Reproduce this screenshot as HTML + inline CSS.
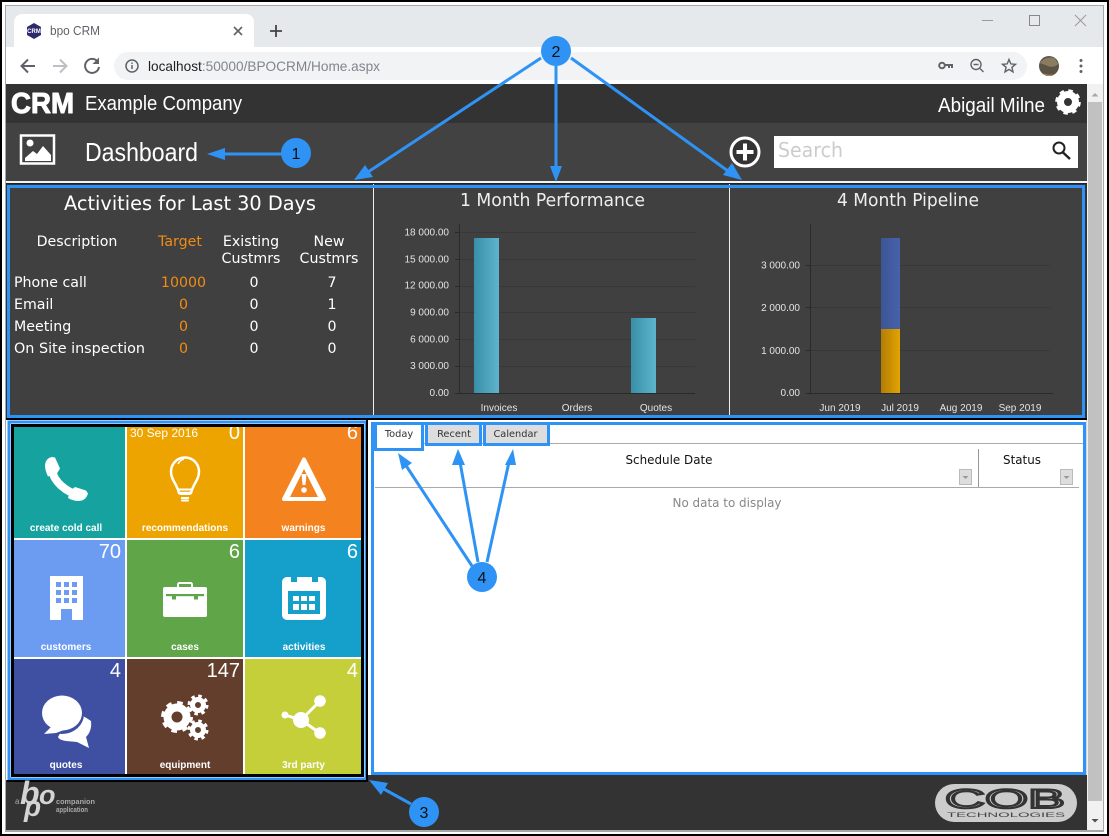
<!DOCTYPE html>
<html><head><meta charset="utf-8"><title>bpo CRM</title>
<style>
html,body{margin:0;padding:0;width:1109px;height:836px;overflow:hidden;background:#fff}
svg{display:block}
.s{font-family:"Liberation Sans",sans-serif}
.d{font-family:"DejaVu Sans",sans-serif}
.a{fill:#e4e4e4;font-family:"Liberation Sans",sans-serif;font-size:10px}
.r{font-family:"DejaVu Sans",sans-serif;font-size:14.2px;fill:#fff}
.n{font-family:"Liberation Sans",sans-serif;font-size:20px;fill:#fff;text-anchor:end}
.l{font-family:"Liberation Sans",sans-serif;font-size:10px;font-weight:bold;fill:#fff;text-anchor:middle}
.m{text-anchor:middle}
.e{text-anchor:end}
</style></head><body>
<svg width="1109" height="836" viewBox="0 0 1109 836" xmlns="http://www.w3.org/2000/svg">
<defs>
<linearGradient id="g1" x1="0" x2="1" y1="0" y2="0"><stop offset="0" stop-color="#3a8fa8"/><stop offset="1" stop-color="#5db4cd"/></linearGradient>
<linearGradient id="g2" x1="0" x2="1" y1="0" y2="0"><stop offset="0" stop-color="#3b5596"/><stop offset="1" stop-color="#4762aa"/></linearGradient>
<linearGradient id="g3" x1="0" x2="1" y1="0" y2="0"><stop offset="0" stop-color="#b37d05"/><stop offset="1" stop-color="#e3a400"/></linearGradient>
</defs>
<!-- outer frame -->
<rect width="1109" height="836" fill="#000"/>
<rect x="2" y="2" width="1105" height="832" fill="#fff"/>
<rect x="5" y="5" width="1099" height="827" fill="#a8a8a8"/>
<!-- browser chrome -->
<rect x="6" y="6" width="1097" height="41" fill="#e6e9ec"/>
<path d="M14 47 V22 a8 8 0 0 1 8-8 H246 a8 8 0 0 1 8 8 V47Z" fill="#fff"/>
<rect x="6" y="47" width="1097" height="37" fill="#fff"/>
<path d="M34 23 l7 4 v8 l-7 4 l-7-4 v-8z" fill="#2e2a6e"/>
<text x="34" y="33" class="s m" font-size="6" font-weight="bold" fill="#fff">CRM</text>
<text x="50" y="35" class="s" font-size="13" fill="#5f6368" textLength="50" lengthAdjust="spacingAndGlyphs">bpo CRM</text>
<path d="M234 27 l8 8 M242 27 l-8 8" stroke="#5f6368" stroke-width="1.6"/>
<path d="M276 25 v12 M270 31 h12" stroke="#444" stroke-width="1.8"/>
<path d="M982 20.5 h11" stroke="#999" stroke-width="1"/>
<rect x="1029.5" y="15.5" width="10" height="10" fill="none" stroke="#888"/>
<path d="M1075 15 l11 11 M1086 15 l-11 11" stroke="#999"/>
<!-- toolbar -->
<path d="M35 66 H22 M28 59.5 L21.5 66 L28 72.5" fill="none" stroke="#5f6368" stroke-width="2"/>
<path d="M53 66 H66 M60 59.5 L66.5 66 L60 72.5" fill="none" stroke="#bcbfc3" stroke-width="2"/>
<path d="M97.5 61.5 A7 7 0 1 0 99 67" fill="none" stroke="#5f6368" stroke-width="2"/>
<path d="M99 57.5 v6.5 h-6.5z" fill="#5f6368"/>
<rect x="114" y="52" width="913" height="28" rx="14" fill="#f1f3f4"/>
<circle cx="132" cy="66" r="6" fill="none" stroke="#5f6368" stroke-width="1.5"/>
<path d="M132 65 v4 M132 62.5 v1.4" stroke="#5f6368" stroke-width="1.5"/>
<text x="148" y="71" class="s" font-size="14" fill="#80868b" textLength="232" lengthAdjust="spacingAndGlyphs"><tspan fill="#202124">localhost</tspan>:50000/BPOCRM/Home.aspx</text>
<circle cx="942" cy="65.5" r="2.8" fill="none" stroke="#5f6368" stroke-width="2"/>
<path d="M945 65 h7 v3 M949 65 v3" fill="none" stroke="#5f6368" stroke-width="2"/>
<circle cx="976" cy="64.5" r="5" fill="none" stroke="#5f6368" stroke-width="1.4"/>
<path d="M973.5 64.5 h5 M980 68.5 l3.5 3.5" stroke="#5f6368" stroke-width="1.4"/>
<path d="M1009 59.5 l1.8 4.4 4.7.4 -3.6 3 1.1 4.6 -4-2.5 -4 2.5 1.1-4.6 -3.6-3 4.7-.4z" fill="none" stroke="#5f6368" stroke-width="1.4"/>
<circle cx="1049" cy="66" r="10" fill="#5b5344"/>
<path d="M1039.5 63 q6-7 15-5 l4 6 q-6 5-13 1z" fill="#8a7c60"/>
<path d="M1043 73 q6 3 12 1 l-3 2 h-6z" fill="#a3865e"/>
<circle cx="1081" cy="60.5" r="1.5" fill="#5f6368"/><circle cx="1081" cy="66" r="1.5" fill="#5f6368"/><circle cx="1081" cy="71.5" r="1.5" fill="#5f6368"/>
<!-- app background -->
<rect x="6" y="84" width="1081" height="746" fill="#333"/>
<rect x="6" y="123" width="1081" height="58" fill="#424242"/>
<rect x="6" y="181" width="1081" height="2" fill="#f4f4f4"/>
<rect x="6" y="183" width="1081" height="1" fill="#222"/>
<!-- scrollbar -->
<rect x="1087" y="84" width="16" height="746" fill="#f1f1f1"/>
<rect x="1088" y="102" width="14" height="699" fill="#c1c1c1"/>
<path d="M1095 93 l-3.500 3.500 h7z" fill="#a8a8a8"/>
<path d="M1091.500 819 h7 l-3.500 3.500z" fill="#505050"/>
<!-- header -->
<text x="11" y="113" class="s" font-size="29" font-weight="bold" fill="#fff" stroke="#fff" stroke-width="1" stroke-linejoin="round" textLength="63" lengthAdjust="spacingAndGlyphs">CRM</text>
<text x="85" y="110" class="s" font-size="20" fill="#fff" textLength="157" lengthAdjust="spacingAndGlyphs">Example Company</text>
<text x="1045" y="112" class="s e" font-size="20" fill="#fff" textLength="107" lengthAdjust="spacingAndGlyphs">Abigail Milne</text>
<circle cx="1068" cy="102" r="7.500" fill="none" stroke="#fff" stroke-width="7"/>
<circle cx="1068" cy="102" r="11" fill="none" stroke="#fff" stroke-width="3.600" stroke-dasharray="4.320 4.320"/>
<!-- subheader -->
<rect x="21" y="135.500" width="33" height="28" fill="none" stroke="#fff" stroke-width="2.500"/>
<circle cx="30" cy="143" r="3.500" fill="#fff"/>
<path d="M25 161 v-3 l8-7 4 3 6-8 8 9 v6z" fill="#fff"/>
<text x="85" y="161" class="s" font-size="26" fill="#fff" textLength="113" lengthAdjust="spacingAndGlyphs">Dashboard</text>
<circle cx="745" cy="152" r="14" fill="#333" stroke="#fff" stroke-width="3"/>
<path d="M745 143.500 v17 M736.500 152 h17" stroke="#fff" stroke-width="4"/>
<rect x="774" y="136" width="304" height="32" fill="#fff"/>
<text x="778" y="157" class="d" font-size="20" fill="#ccc" textLength="65" lengthAdjust="spacingAndGlyphs">Search</text>
<circle cx="1059" cy="148" r="5.500" fill="none" stroke="#222" stroke-width="2"/>
<path d="M1063 152.500 l7 6.500" stroke="#222" stroke-width="2.400"/>
<!-- stats panel -->
<rect x="7" y="185" width="1078" height="233" fill="#404040"/>
<path d="M373.500 184 V418 M729.500 184 V418" stroke="#eee" stroke-width="1"/>
<text x="190" y="210" class="d m" font-size="19.500" fill="#fff" textLength="252" lengthAdjust="spacingAndGlyphs">Activities for Last 30 Days</text>
<text x="77" y="246" class="r m">Description</text>
<text x="180" y="246" class="r m" style="fill:#f28c13">Target</text>
<text x="251" y="246" class="r m">Existing</text><text x="251" y="263" class="r m">Custmrs</text>
<text x="329" y="246" class="r m">New</text><text x="329" y="263" class="r m">Custmrs</text>
<text x="14" y="287" class="r">Phone call</text><text x="14" y="309" class="r">Email</text><text x="14" y="331" class="r">Meeting</text><text x="14" y="353" class="r" textLength="131" lengthAdjust="spacingAndGlyphs">On Site inspection</text>
<text x="183.500" y="287" class="r m" style="fill:#f28c13">10000</text><text x="183.500" y="309" class="r m" style="fill:#f28c13">0</text><text x="183.500" y="331" class="r m" style="fill:#f28c13">0</text><text x="183.500" y="353" class="r m" style="fill:#f28c13">0</text>
<text x="254" y="287" class="r m">0</text><text x="254" y="309" class="r m">0</text><text x="254" y="331" class="r m">0</text><text x="254" y="353" class="r m">0</text>
<text x="332" y="287" class="r m">7</text><text x="332" y="309" class="r m">1</text><text x="332" y="331" class="r m">0</text><text x="332" y="353" class="r m">0</text>
<!-- chart 1 -->
<text x="552.500" y="206" class="d m" font-size="17.500" fill="#eee" textLength="185" lengthAdjust="spacingAndGlyphs">1 Month Performance</text>
<path d="M459 232.500 H695 M459 259.500 H695 M459 286.500 H695 M459 312.500 H695 M459 339.500 H695 M459 366.500 H695" stroke="#383838"/>
<path d="M459.500 224 V393 M455 393.500 H695 M455 232.500 h4 M455 259.500 h4 M455 286.500 h4 M455 312.500 h4 M455 339.500 h4 M455 366.500 h4" stroke="#2a2a2a" fill="none"/>
<rect x="474" y="238" width="25" height="155" fill="url(#g1)"/>
<rect x="631" y="318" width="25" height="75" fill="url(#g1)"/>
<text x="449" y="235.500" class="a e">18 000.00</text><text x="449" y="262.500" class="a e">15 000.00</text><text x="449" y="288.500" class="a e">12 000.00</text><text x="449" y="315.500" class="a e">9 000.00</text><text x="449" y="342.500" class="a e">6 000.00</text><text x="449" y="369" class="a e">3 000.00</text><text x="449" y="396" class="a e">0.00</text>
<text x="499" y="411" class="a m">Invoices</text><text x="577" y="411" class="a m">Orders</text><text x="656" y="411" class="a m">Quotes</text>
<!-- chart 2 -->
<text x="908" y="206" class="d m" font-size="17.500" fill="#eee" textLength="142" lengthAdjust="spacingAndGlyphs">4 Month Pipeline</text>
<path d="M811 265.500 H1050 M811 307.500 H1050 M811 350.500 H1050" stroke="#383838"/>
<path d="M810.500 224 V393 M806 393.500 H1053 M806 265.500 h4 M806 307.500 h4 M806 350.500 h4" stroke="#2a2a2a" fill="none"/>
<rect x="881" y="238" width="19" height="91" fill="url(#g2)"/>
<rect x="881" y="329" width="19" height="64" fill="url(#g3)"/>
<text x="800" y="268.500" class="a e">3 000.00</text><text x="800" y="311" class="a e">2 000.00</text><text x="800" y="354" class="a e">1 000.00</text><text x="800" y="396" class="a e">0.00</text>
<text x="840" y="411" class="a m">Jun 2019</text><text x="900" y="411" class="a m">Jul 2019</text><text x="961" y="411" class="a m">Aug 2019</text><text x="1020" y="411" class="a m">Sep 2019</text>
<rect x="8.500" y="186.500" width="1075" height="230" fill="none" stroke="#2f93f5" stroke-width="3"/>
<!-- lower area -->
<rect x="6" y="418" width="1081" height="2" fill="#000"/>
<rect x="6" y="420" width="365" height="360" fill="#fff"/>
<rect x="14" y="427" width="111" height="111" fill="#16a3a0"/>
<rect x="127" y="427" width="116" height="111" fill="#eea400"/>
<rect x="245" y="427" width="116" height="111" fill="#f4821e"/>
<rect x="14" y="540" width="111" height="117" fill="#6c9bf2"/>
<rect x="127" y="540" width="116" height="117" fill="#60a649"/>
<rect x="245" y="540" width="116" height="117" fill="#14a0cb"/>
<rect x="14" y="659" width="111" height="115" fill="#3f50a3"/>
<rect x="127" y="659" width="116" height="115" fill="#643e2d"/>
<rect x="245" y="659" width="116" height="115" fill="#c4cf3a"/>
<!-- phone -->
<path d="M52 470 C54 482 66 492 79 495" fill="none" stroke="#fff" stroke-width="8"/>
<path d="M45 465 q1-7 7-8 l3 .5 5 11 -3 5 -9 3 q-3-6-3-11.500z" fill="#fff"/>
<path d="M70 491 l5-4 l11 3.500 2 3 q-2 7-9 7.500 q-6 0-11-3z" fill="#fff"/>
<!-- bulb -->
<path d="M179 493 C177 484 171 480 171 471.500 A14 14 0 0 1 199 471.500 C199 480 193 484 191 493z" fill="none" stroke="#fff" stroke-width="2.500"/>
<path d="M178 464 q2-4 6-5" fill="none" stroke="#fff" stroke-width="1.500"/>
<path d="M179 489.500 h12 M179.500 494 h11 M181 498 h8" stroke="#fff" stroke-width="2"/>
<path d="M182 500.500 h6" stroke="#fff" stroke-width="2" stroke-linecap="round"/>
<!-- warning -->
<path d="M304 459.500 L324 499 H284z" fill="#fff" stroke="#fff" stroke-width="4" stroke-linejoin="round"/>
<path d="M304 469 L318 497 H290z" fill="#f4821e"/>
<path d="M301.500 474 h5 l-1 11 h-3z" fill="#fff"/><circle cx="304" cy="490" r="2.800" fill="#fff"/>
<!-- building -->
<rect x="50" y="576" width="33" height="44" fill="#fff"/>
<path d="M56 582 h5 v5 h-5z M64 582 h5 v5 h-5z M72 582 h5 v5 h-5z M56 590 h5 v5 h-5z M64 590 h5 v5 h-5z M72 590 h5 v5 h-5z M56 598 h5 v5 h-5z M64 598 h5 v5 h-5z M72 598 h5 v5 h-5z M61 609 h11 v11 h-11z" fill="#6c9bf2"/>
<!-- briefcase -->
<rect x="163" y="587" width="44" height="30" rx="2" fill="#fff"/>
<rect x="178" y="583" width="14" height="6" rx="1.500" fill="none" stroke="#fff" stroke-width="2"/>
<rect x="166" y="594" width="38" height="2.200" fill="#60a649"/>
<rect x="172" y="595" width="4" height="4.500" fill="#60a649"/><rect x="194" y="595" width="4" height="4.500" fill="#60a649"/>
<!-- calendar -->
<rect x="282" y="577" width="44" height="43" rx="5" fill="#fff"/>
<rect x="288" y="591" width="32" height="23" fill="#14a0cb"/>
<rect x="291" y="576" width="6" height="6" fill="#14a0cb"/><rect x="312" y="576" width="6" height="6" fill="#14a0cb"/>
<path d="M293 596 h6 v5 h-6z M301 596 h6 v5 h-6z M309 596 h6 v5 h-6z M293 604 h6 v6 h-6z M301 604 h6 v6 h-6z M309 604 h6 v6 h-6z" fill="#fff"/>
<!-- chat -->
<path d="M72 712 q11 3 19 9 c1 8-2 13-5 16 l3 11 -12-6 -11-1 q-7-1-8-4z" fill="#fff"/>
<ellipse cx="62" cy="714" rx="22" ry="20" fill="#3f50a3"/>
<ellipse cx="62" cy="713" rx="20" ry="17.500" fill="#fff"/>
<path d="M51 727 l-7 7 12-1 8-3z" fill="#fff"/>
<!-- gears -->
<circle cx="177" cy="717" r="9.500" fill="none" stroke="#fff" stroke-width="8"/>
<circle cx="177" cy="717" r="14" fill="none" stroke="#fff" stroke-width="4" stroke-dasharray="5.500 5.500"/>
<circle cx="198" cy="705" r="5.500" fill="none" stroke="#fff" stroke-width="5"/>
<circle cx="198" cy="705" r="9" fill="none" stroke="#fff" stroke-width="3" stroke-dasharray="3.530 3.530"/>
<circle cx="198" cy="730" r="5.500" fill="none" stroke="#fff" stroke-width="5"/>
<circle cx="198" cy="730" r="9" fill="none" stroke="#fff" stroke-width="3" stroke-dasharray="3.530 3.530"/>
<!-- share -->
<path d="M320 701 L301 720 L320 733 M301 720 L285 715" stroke="#fff" stroke-width="3" fill="none"/>
<circle cx="301" cy="720" r="8" fill="#fff"/><circle cx="320" cy="701" r="5.800" fill="#fff"/><circle cx="320" cy="733" r="5.800" fill="#fff"/><circle cx="285" cy="715" r="3.500" fill="#fff"/>
<!-- tile text -->
<text x="130" y="437" class="s" font-size="12" fill="#fff">30 Sep 2016</text>
<text x="240" y="439" class="n">0</text><text x="358" y="439" class="n">6</text>
<text x="121" y="558" class="n">70</text><text x="240" y="558" class="n">6</text><text x="358" y="558" class="n">6</text>
<text x="121" y="677" class="n">4</text><text x="240" y="677" class="n">147</text><text x="358" y="677" class="n">4</text>
<text x="66" y="531" class="l">create cold call</text><text x="185" y="531" class="l">recommendations</text><text x="303.500" y="531" class="l">warnings</text>
<text x="66" y="650" class="l">customers</text><text x="185" y="650" class="l">cases</text><text x="304" y="650" class="l">activities</text>
<text x="66" y="768" class="l">quotes</text><text x="185" y="768" class="l">equipment</text><text x="303.500" y="768" class="l">3rd party</text>
<!-- tile frames -->
<rect x="12.500" y="425.500" width="350" height="350" fill="none" stroke="#000" stroke-width="3"/>
<rect x="9" y="422" width="357" height="357" fill="none" stroke="#2f93f5" stroke-width="3"/>
<path d="M7 781 H368" stroke="#000" stroke-width="2"/>
<path d="M367 420 V781" stroke="#000" stroke-width="2"/>
<!-- data panel -->
<rect x="368" y="420" width="719" height="355" fill="#fff"/>
<rect x="368" y="775" width="719" height="6" fill="#333"/>
<rect x="1086" y="420" width="1" height="355" fill="#d8d8d8"/>
<path d="M372 443.500 H1085 M375 487.500 H1079" stroke="#aaa" stroke-width="1"/>
<rect x="426.500" y="425" width="54" height="20" fill="#ddd"/>
<rect x="484.500" y="425" width="64" height="20" fill="#ddd"/>
<rect x="376" y="425" width="46" height="24" fill="#fff"/>
<text x="399" y="437" class="d m" font-size="9.800" fill="#333">Today</text>
<text x="454" y="437" class="d m" font-size="9.800" fill="#333">Recent</text>
<text x="515.500" y="437" class="d m" font-size="9.800" fill="#333">Calendar</text>
<rect x="375.500" y="423.500" width="47" height="26" fill="none" stroke="#2f93f5" stroke-width="3"/>
<rect x="426.500" y="423.500" width="54" height="21" fill="none" stroke="#2f93f5" stroke-width="3"/>
<rect x="484.500" y="423.500" width="64" height="21" fill="none" stroke="#2f93f5" stroke-width="3"/>
<text x="669" y="464" class="d m" font-size="12.500" fill="#111" textLength="87" lengthAdjust="spacingAndGlyphs">Schedule Date</text>
<text x="1022" y="464" class="d m" font-size="12.500" fill="#111" textLength="38" lengthAdjust="spacingAndGlyphs">Status</text>
<text x="727" y="507" class="d m" font-size="12.500" fill="#888" textLength="109" lengthAdjust="spacingAndGlyphs">No data to display</text>
<path d="M978.500 449 V487" stroke="#999"/>
<rect x="959.500" y="469.500" width="12" height="15" fill="#ddd" stroke="#bbb"/><path d="M962.500 476 h6 l-3 3z" fill="#999"/>
<rect x="1060.500" y="469.500" width="12" height="15" fill="#ddd" stroke="#bbb"/><path d="M1063.500 476 h6 l-3 3z" fill="#999"/>
<rect x="372.500" y="423.500" width="712" height="350" fill="none" stroke="#2f93f5" stroke-width="3"/>
<!-- footer logos -->
<text x="15" y="804" class="s" font-size="8" fill="#aaa">a</text>
<text x="20" y="804" class="s" font-size="32" font-weight="bold" font-style="italic" fill="#d4d4d4">b</text>
<text x="39" y="804" class="s" font-size="27" font-weight="bold" font-style="italic" fill="#d4d4d4">o</text>
<text x="24" y="816" class="s" font-size="28" font-weight="bold" font-style="italic" fill="#d4d4d4">p</text>
<text x="56" y="804" class="s" font-size="7" font-weight="bold" fill="#aaa" textLength="39" lengthAdjust="spacingAndGlyphs">companion</text>
<text x="56" y="812" class="s" font-size="7" font-weight="bold" fill="#aaa" textLength="32" lengthAdjust="spacingAndGlyphs">application</text>
<rect x="935" y="784" width="142" height="38" rx="19" fill="#ccc"/>
<text x="1005" y="808" class="s m" font-size="27" fill="#ccc" stroke="#333" stroke-width="2" textLength="120" lengthAdjust="spacingAndGlyphs">COB</text>
<text x="1006" y="817" class="s m" font-size="6.500" fill="#444" textLength="118" lengthAdjust="spacingAndGlyphs">TECHNOLOGIES</text>
<!-- annotations -->
<g stroke="#2f93f5" stroke-width="3" fill="none">
<path d="M282 154 H222"/><path d="M541 58 L368 172"/><path d="M556 66 V168"/><path d="M571 58 L728 171"/>
<path d="M411 804 L382 788"/><path d="M472 566 L405 464"/><path d="M478 562 L460 462"/><path d="M487 562 L509 462"/>
</g>
<g fill="#2f93f5">
<path d="M207 154 L225 148 V160z"/>
<path d="M354 180 L365 165 L373 177z"/><path d="M556 182 L550 166 H562z"/><path d="M742 180 L723 175 L732 163z"/>
<path d="M369 780 L388 783 L381 795z"/>
<path d="M398 453 L412 463 L402 470z"/><path d="M458 449 L465 465 L452 465z"/><path d="M513 449 L516 465 L505 465z"/>
<circle cx="296" cy="153" r="15"/><circle cx="556" cy="51" r="15"/><circle cx="424" cy="812" r="15"/><circle cx="482" cy="577" r="15"/>
</g>
<text x="296" y="159" class="s m" font-size="16" fill="#111">1</text><text x="556" y="57" class="s m" font-size="16" fill="#111">2</text><text x="424" y="818" class="s m" font-size="16" fill="#111">3</text><text x="482" y="583" class="s m" font-size="16" fill="#111">4</text>
</svg>
</body></html>
